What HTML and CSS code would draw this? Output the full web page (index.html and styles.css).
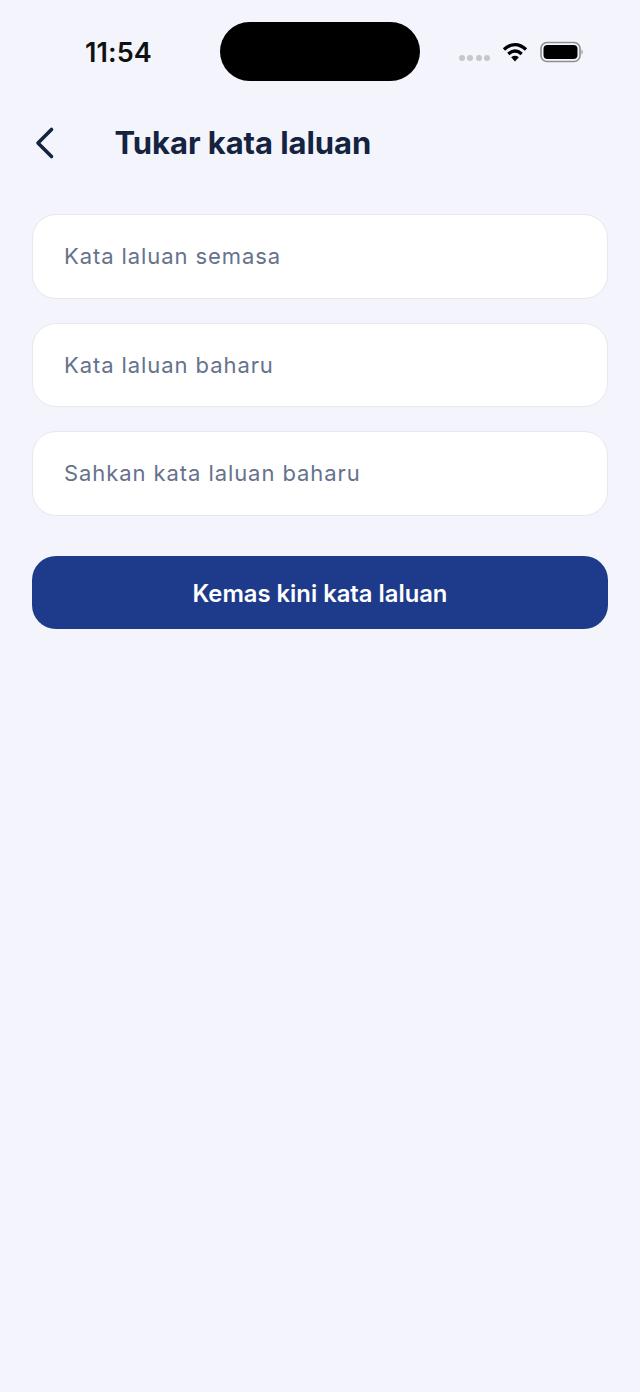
FILE: index.html
```html
<!DOCTYPE html>
<html lang="ms">
<head>
<meta charset="utf-8">
<title>Tukar kata laluan</title>
<link rel="stylesheet" href="styles.css">
</head>
<body>
<div class="screen">
  <div class="status">
    <span class="time">11:54</span>
    <div class="island"></div>
    <div class="status-icons">
      <div class="dots"><i></i><i></i><i></i><i></i></div>
      <svg class="wifi" width="26" height="20" viewBox="0 0 26 20"><path d="M2 7.500C9 1 17 1 24 7.500" fill="none" stroke="#000" stroke-width="3.400"/><path d="M6.300 12C10.600 8.200 15.400 8.200 19.700 12" fill="none" stroke="#000" stroke-width="3.400"/><path d="M9.200 15.200L13 19.400L16.800 15.200C14.400 13.400 11.600 13.400 9.200 15.200Z" fill="#000"/></svg>
      <svg class="battery" width="44" height="22" viewBox="0 0 44 22"><rect x="1" y="1.500" width="39" height="19" rx="6" fill="none" stroke="#8e8e90" stroke-width="1.600"/><rect x="3.500" y="4" width="34" height="14" rx="4" fill="#000"/><path d="M41.500 8.500C43 9 43 13 41.500 13.500Z" fill="#8e8e90"/></svg>
    </div>
  </div>
  <header class="topbar">
    <svg class="back" width="24" height="34" viewBox="0 0 24 34"><path d="M19.500 3.500L6 17L19.500 30.500" fill="none" stroke="#14233f" stroke-width="3.600" stroke-linecap="round" stroke-linejoin="round"/></svg>
    <h1 class="title">Tukar kata laluan</h1>
  </header>
  <main class="form">
    <div class="field">Kata laluan semasa</div>
    <div class="field">Kata laluan baharu</div>
    <div class="field">Sahkan kata laluan baharu</div>
    <button class="submit" type="button"><span class="submit-label">Kemas kini kata laluan</span></button>
  </main>
</div>
</body>
</html>
```
FILE: styles.css
```css
* { box-sizing: border-box; }
html, body { margin: 0; padding: 0; }
body { background: #f4f5fc; font-family: Inter, "Liberation Sans", sans-serif; }
.screen { width: 640px; height: 1392px; overflow: hidden; background: #f4f5fc; }
.status { height: 104px; padding: 22px 0 0 85px; display: flex; align-items: flex-start; }
.time { flex: none; width: 135px; margin-top: 16px; font-size: 27px; line-height: 30px; font-weight: 600; letter-spacing: 0.1px; color: #111; }
.island { flex: none; width: 200px; height: 59px; border-radius: 30px; background: #000; }
.status-icons { flex: none; height: 24px; margin-left: 39px; margin-top: 18px; display: flex; align-items: center; }
.dots { display: flex; gap: 2.300px; margin-top: 11px; margin-right: 12px; }
.dots i { width: 6px; height: 6px; border-radius: 50%; background: #c6c7cb; }
.wifi { margin-right: 12px; }
.topbar { height: 78px; padding: 0 32px; display: flex; align-items: center; }
.back { flex: none; }
.title { margin: 0 0 0 58.500px; font-size: 31px; line-height: 40px; font-weight: 700; letter-spacing: -0.07px; color: #14233f; }
.form { padding: 32px 32px 0; display: flex; flex-direction: column; gap: 24px; }
.field { height: 84.500px; padding: 0 31px; display: flex; align-items: center; background: #fff; border: 1px solid #e6e8ed; border-radius: 24px; font-size: 22px; letter-spacing: 0.92px; color: #66728c; }
.submit { margin-top: 16px; height: 73px; border: 0; border-radius: 24px; background: #1d3b8a; color: #fff; font-family: inherit; font-size: 23.800px; font-weight: 600; }
.submit-label { display: block; padding-top: 2px; }
```
